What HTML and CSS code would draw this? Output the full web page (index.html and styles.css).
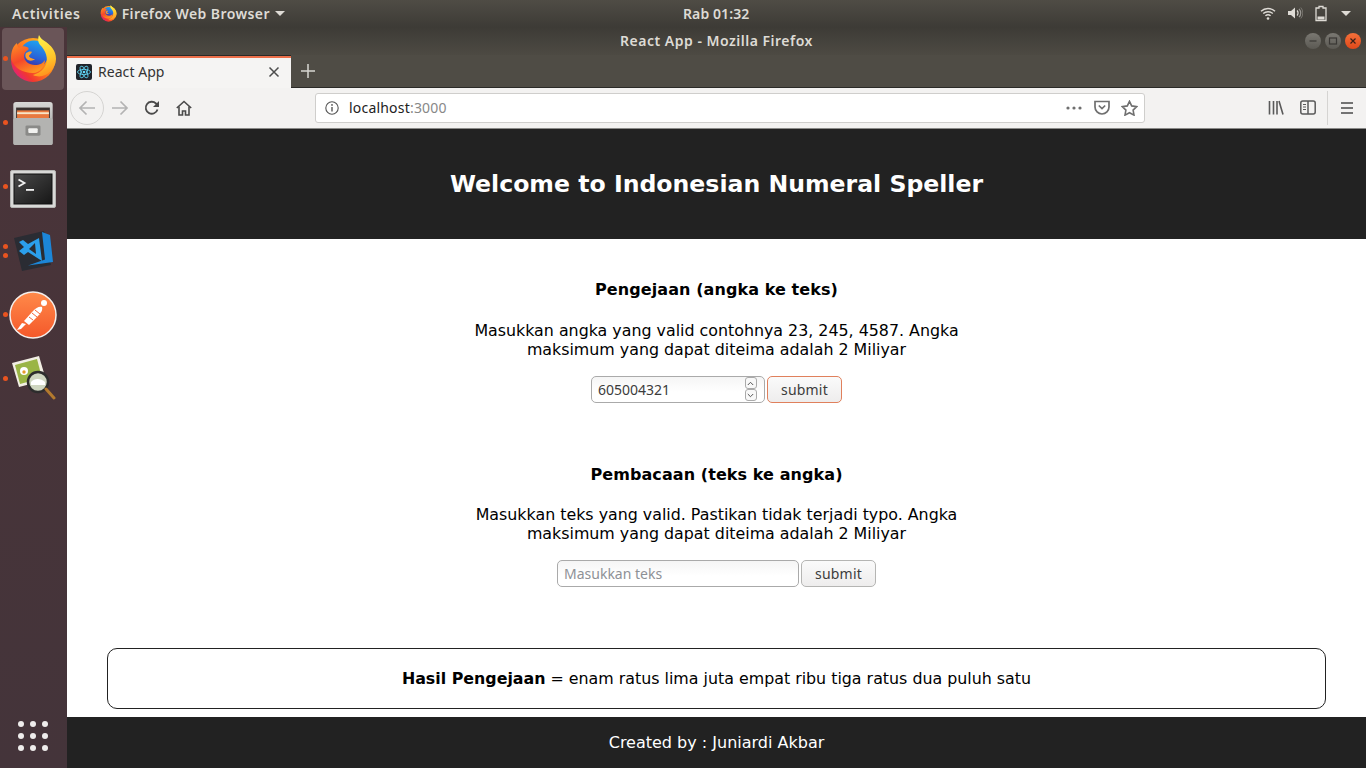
FILE: index.html
```html
<!DOCTYPE html>
<html lang="id">
<head>
<meta charset="utf-8">
<title>React App</title>
<link rel="stylesheet" href="styles.css">
</head>
<body>
<svg class="defs" width="0" height="0" aria-hidden="true">
  <defs>
    <linearGradient id="ffo" x1="0.9" y1="0.2" x2="0.15" y2="0.9"><stop offset="0" stop-color="#ffb71f"/><stop offset="0.45" stop-color="#ff7a1e"/><stop offset="0.8" stop-color="#f2382f"/><stop offset="1" stop-color="#e0207a"/></linearGradient>
    <linearGradient id="ffb" x1="0.7" y1="0" x2="0.4" y2="1"><stop offset="0" stop-color="#1fa6f0"/><stop offset="0.6" stop-color="#2a62d8"/><stop offset="1" stop-color="#40289c"/></linearGradient>
    <linearGradient id="ffy" x1="0.4" y1="0" x2="0.6" y2="1"><stop offset="0" stop-color="#fff24a"/><stop offset="0.6" stop-color="#ffc52a"/><stop offset="1" stop-color="#ff8f1e"/></linearGradient>
    <linearGradient id="ffr" x1="0.2" y1="0" x2="0.7" y2="1"><stop offset="0" stop-color="#ff8a24"/><stop offset="0.5" stop-color="#f5482a"/><stop offset="1" stop-color="#ff9a20"/></linearGradient>
    <symbol id="firefox" viewBox="0 0 48 48">
      <circle cx="24" cy="25" r="22" fill="url(#ffo)"/>
      <circle cx="25" cy="19.500" r="14" fill="url(#ffb)"/>
      <path d="M30 0C28 6 30 9 33 12C38 18 40 27 35 33C32 37 27 39 24 40C34 45 47 36 47 24C47 15 41 10 37 7C34 5 31 3 30 0z" fill="url(#ffy)"/>
      <path d="M2 24C2 16 4 11 8 8C8 11 9 12 10 13C13 11 15 11 18 12C20 13 20 14 19 15C17 16 15 18 15 21C15 26 20 30 26 30C31 30 34 28 36 25C36 31 31 38 24 38C14 38 5 33 2 24z" fill="url(#ffr)"/>
      <path d="M17 18c2-1 4-2 6-1-1 2-3 3-3 4s3 3 6 3c-2 2-5 2-7 1-3-2-3-5-2-7z" fill="#ff9d2a"/>
    </symbol>
  </defs>
</svg>

<header class="topbar">
  <div class="topbar-left">
    <span class="activities">Activities</span>
    <span class="appmenu">
      <svg class="appmenu-icon" width="17" height="17"><use href="#firefox"/></svg>
      <span>Firefox Web Browser</span>
      <i class="caret"></i>
    </span>
  </div>
  <div class="clock">Rab 01:32</div>
  <div class="tray">
    <svg width="16" height="16" viewBox="0 0 16 16" fill="none" stroke="#dedbd5" stroke-width="1.4"><path d="M1 6.3a10 10 0 0 1 14 0"/><path d="M3.2 8.6a7 7 0 0 1 9.600 0"/><path d="M5.400 10.800a4 4 0 0 1 5.200 0"/><circle cx="8" cy="13.500" r="1.300" fill="#dedbd5" stroke="none"/></svg>
    <svg width="16" height="16" viewBox="0 0 16 16" fill="none"><path d="M1 6h3l4-3.500v11L4 10H1z" fill="#dedbd5"/><path d="M10 5.500a3.500 3.500 0 0 1 0 5" stroke="#dedbd5" stroke-width="1.200"/><path d="M12 3.800a6 6 0 0 1 0 8.400" stroke="#9c9a94" stroke-width="1.200"/><path d="M13.800 2.500a8.500 8.500 0 0 1 0 11" stroke="#77756f" stroke-width="1"/></svg>
    <svg width="14" height="17" viewBox="0 0 14 17" fill="none"><path d="M5 1.500h4v1.500h3v12.500H2V3h3z" stroke="#dedbd5" stroke-width="1.300"/><rect x="3.500" y="11.500" width="7" height="3" fill="#dedbd5"/></svg>
    <i class="caret tray-caret"></i>
  </div>
</header>

<div class="desktop">
  <nav class="dock">
    <div class="dock-item is-active"><i class="dot"></i>
      <svg width="48" height="48"><use href="#firefox"/></svg>
    </div>
    <div class="dock-item"><i class="dot"></i>
      <svg width="42" height="45" viewBox="0 0 44 48">
        <defs><linearGradient id="cab" x1="0" y1="0" x2="0" y2="1"><stop offset="0" stop-color="#d8d8d6"/><stop offset="1" stop-color="#8e8e8c"/></linearGradient></defs>
        <rect x="1" y="1" width="42" height="46" rx="3" fill="url(#cab)"/>
        <rect x="4" y="7" width="36" height="12" fill="#3a3230"/>
        <rect x="5" y="10" width="34" height="9" fill="#e8793f"/>
        <rect x="5" y="12" width="34" height="2" fill="#f7e6c8"/>
        <rect x="1" y="18" width="42" height="29" rx="2" fill="#b3b3b1"/>
        <rect x="14" y="26" width="16" height="11" rx="1.500" fill="#8a8a88"/>
        <rect x="17" y="29" width="10" height="5" rx="1" fill="#f1f1ef"/>
      </svg>
    </div>
    <div class="dock-item dock-terminal"><i class="dot"></i>
      <svg width="46" height="38" viewBox="0 0 46 38">
        <defs><linearGradient id="term" x1="0" y1="0" x2="1" y2="1"><stop offset="0" stop-color="#4a4a4a"/><stop offset="1" stop-color="#161616"/></linearGradient></defs>
        <rect x="0.500" y="0.500" width="45" height="37" rx="1.500" fill="#d9d9d7" stroke="#b5b5b3"/>
        <rect x="4" y="4" width="38" height="30" fill="url(#term)" stroke="#111"/>
        <path d="M8.500 9.500l6 3.500-6 3.500" fill="none" stroke="#f2f2f2" stroke-width="1.800"/>
        <rect x="16" y="19" width="8" height="1.800" fill="#f2f2f2"/>
      </svg>
    </div>
    <div class="dock-item"><i class="dot"></i><i class="dot dot-second"></i>
      <svg width="44" height="44" viewBox="0 0 44 44">
        <path d="M3 9l30-7 7 34-29 6z" fill="#2a2c33"/>
        <path d="M31 3l8 3 3 27-25 3.500 17-6z" fill="#1c86d8"/>
        <path d="M28 9l3 23-14-9-4 3-5-4 5-4-5-5 4-2 5 4z" fill="#2b9fec"/>
        <path d="M24 14l1 11-7-5z" fill="#2a2c33"/>
      </svg>
    </div>
    <div class="dock-item"><i class="dot"></i>
      <svg width="48" height="48" viewBox="0 0 48 48">
        <defs><linearGradient id="pm" x1="0.500" y1="0" x2="0.500" y2="1"><stop offset="0" stop-color="#ff8a4a"/><stop offset="1" stop-color="#f4582a"/></linearGradient></defs>
        <circle cx="24" cy="24" r="23" fill="url(#pm)" stroke="#f4efec" stroke-width="1.500"/>
        <circle cx="35" cy="12" r="3" fill="#fff"/>
        <path d="M33 16c1 3-1 6-5 10l-8 8-5-4 9-10c3-3 6-5 9-4z" fill="#fff"/>
        <path d="M17 33l-5 5-4 1 5-7z" fill="#fff"/>
        <path d="M26 19l5 4M23 22l5 4M20 26l4 3" stroke="#f4663a" stroke-width="1"/>
      </svg>
    </div>
    <div class="dock-item"><i class="dot"></i>
      <svg width="46" height="48" viewBox="0 0 46 48">
        <path d="M2 8l27-7 7 24-27 7z" fill="#f2efe4"/>
        <path d="M5 10l22-6 5 19-22 6z" fill="#9ab545"/>
        <circle cx="14" cy="16" r="4" fill="#fff"/><circle cx="14" cy="17" r="1.700" fill="#e89a2a"/>
        <circle cx="28" cy="27" r="10" fill="#cfd6c0" stroke="#2d2d2d" stroke-width="2.500"/>
        <path d="M21 27c3-4 10-4 14 0v3H21z" fill="#fff"/>
        <path d="M36 34l8 9" stroke="#b37a2e" stroke-width="3" stroke-linecap="round"/>
      </svg>
    </div>
    <div class="dock-apps">
      <i></i><i></i><i></i><i></i><i></i><i></i><i></i><i></i><i></i>
    </div>
  </nav>

  <div class="window">
    <div class="titlebar">
      <span class="title">React App - Mozilla Firefox</span>
      <div class="winbtns">
        <span class="winbtn"><svg width="10" height="10" viewBox="0 0 10 10"><path d="M1.500 5h7" stroke="#3a3835" stroke-width="1.200"/></svg></span>
        <span class="winbtn"><svg width="10" height="10" viewBox="0 0 10 10"><rect x="1.500" y="2" width="7" height="6" fill="none" stroke="#3a3835" stroke-width="1.200"/></svg></span>
        <span class="winbtn winbtn-close"><svg width="10" height="10" viewBox="0 0 10 10"><path d="M2.500 2.500l5 5M7.500 2.500l-5 5" stroke="#3a2018" stroke-width="1.200"/></svg></span>
      </div>
    </div>

    <div class="tabstrip">
      <div class="tab">
        <svg class="favicon" width="16" height="16" viewBox="0 0 16 16"><rect width="16" height="16" rx="2" fill="#20232a"/><g fill="none" stroke="#61dafb" stroke-width="0.800"><ellipse cx="8" cy="8" rx="6.500" ry="2.600"/><ellipse cx="8" cy="8" rx="6.500" ry="2.600" transform="rotate(60 8 8)"/><ellipse cx="8" cy="8" rx="6.500" ry="2.600" transform="rotate(120 8 8)"/></g><circle cx="8" cy="8" r="1.300" fill="#61dafb"/></svg>
        <span class="tab-title">React App</span>
        <svg class="tab-close" width="12" height="12" viewBox="0 0 12 12"><path d="M1.500 1.500l9 9M10.500 1.500l-9 9" stroke="#4d4d4d" stroke-width="1.500"/></svg>
      </div>
      <svg class="newtab" width="14" height="14" viewBox="0 0 14 14"><path d="M7 0v14M0 7h14" stroke="#d8d6d1" stroke-width="1.500"/></svg>
    </div>

    <div class="navbar">
      <span class="backbtn"><svg width="18" height="16" viewBox="0 0 18 16" fill="none" stroke="#b3b3b3" stroke-width="1.700"><path d="M17 8H2M8.500 1.500L2 8l6.500 6.500"/></svg></span>
      <svg class="fwd" width="18" height="16" viewBox="0 0 18 16" fill="none" stroke="#b3b3b3" stroke-width="1.700"><path d="M1 8h15M9.500 1.500L16 8l-6.500 6.500"/></svg>
      <svg class="reload" width="16" height="16" viewBox="0 0 16 16" fill="none" stroke="#4a4a4a" stroke-width="1.800"><path d="M13.500 9.500A6 6 0 1 1 12 3.500L14.500 6"/><path d="M15 1v6H9" fill="#4a4a4a" stroke="none"/></svg>
      <svg class="home" width="16" height="16" viewBox="0 0 16 16" fill="none" stroke="#4a4a4a" stroke-width="1.600"><path d="M0.800 8L8 1.500 15.200 8"/><path d="M3 6.500V15h3.500v-4h3v4H13V6.500"/></svg>
      <div class="urlbar">
        <svg class="info" width="14" height="14" viewBox="0 0 14 14" fill="none" stroke="#555"><circle cx="7" cy="7" r="6.200" stroke-width="1.100"/><path d="M7 6v4.500" stroke-width="1.400"/><circle cx="7" cy="3.900" r="0.900" fill="#555" stroke="none"/></svg>
        <span class="url">localhost<span class="url-port">:3000</span></span>
        <svg class="more" width="16" height="4" viewBox="0 0 16 4" fill="#6f6f6f"><circle cx="2" cy="2" r="1.600"/><circle cx="8" cy="2" r="1.600"/><circle cx="14" cy="2" r="1.600"/></svg>
        <svg class="pocket" width="16" height="15" viewBox="0 0 16 15" fill="none" stroke="#6f6f6f" stroke-width="1.700"><path d="M1 1.500h14v5.500a7 7 0 0 1-14 0z"/><path d="M4.800 5.500L8 8.500l3.200-3"/></svg>
        <svg class="star" width="17" height="16" viewBox="0 0 17 16" fill="none" stroke="#6f6f6f" stroke-width="1.600"><path d="M8.500 1.300l2.200 4.600 5 .7-3.600 3.500.9 5-4.500-2.400L4 15.100l.9-5L1.300 6.600l5-.7z"/></svg>
      </div>
      <div class="nav-right">
        <svg class="library" width="16" height="15" viewBox="0 0 16 15" fill="none" stroke="#5a5a5a" stroke-width="1.600"><path d="M1.500 1v13.500M5.500 1v13.500M9 1v13.500M11 1l4 13.500"/></svg>
        <svg width="16" height="15" viewBox="0 0 16 15" fill="none" stroke="#5a5a5a" stroke-width="1.500"><rect x="0.800" y="1" width="14.400" height="13" rx="2"/><path d="M8 1v13" /><path d="M3 4.500h3M3 7h3M3 9.500h3" stroke-width="1"/></svg>
        <i class="nav-sep"></i>
        <svg width="14" height="12" viewBox="0 0 14 12" fill="none" stroke="#4a4a4a" stroke-width="1.700"><path d="M1 1h12M1 6h12M1 11h12"/></svg>
      </div>
    </div>

    <div class="page">
      <header class="hero"><h1>Welcome to Indonesian Numeral Speller</h1></header>
      <main class="content">
        <section class="speller">
          <h2>Pengejaan (angka ke teks)</h2>
          <p>Masukkan angka yang valid contohnya 23, 245, 4587. Angka<br>maksimum yang dapat diteima adalah 2 Miliyar</p>
          <form class="field">
            <span class="number-wrap">
              <input class="input input-number" type="text" value="605004321">
              <span class="spin">
                <span class="spin-btn"><svg width="7" height="5" viewBox="0 0 7 5"><path d="M0.800 4L3.500 1.300 6.200 4" fill="none" stroke="#555"/></svg></span>
                <span class="spin-btn"><svg width="7" height="5" viewBox="0 0 7 5"><path d="M0.800 1L3.500 3.700 6.200 1" fill="none" stroke="#555"/></svg></span>
              </span>
            </span>
            <button class="btn btn-focus" type="button">submit</button>
          </form>
        </section>
        <section class="speller speller-second">
          <h2>Pembacaan (teks ke angka)</h2>
          <p>Masukkan teks yang valid. Pastikan tidak terjadi typo. Angka<br>maksimum yang dapat diteima adalah 2 Miliyar</p>
          <form class="field">
            <input class="input input-text" type="text" placeholder="Masukkan teks">
            <button class="btn" type="button">submit</button>
          </form>
        </section>
        <div class="result"><span><strong>Hasil Pengejaan</strong> = enam ratus lima juta empat ribu tiga ratus dua puluh satu</span></div>
      </main>
      <footer class="footer">Created by : Juniardi Akbar</footer>
    </div>
  </div>
</div>
</body>
</html>
```

FILE: styles.css
```css
* { box-sizing: border-box; }
html, body { margin: 0; height: 100%; overflow: hidden; }
body {
  width: 1366px;
  height: 768px;
  display: flex;
  flex-direction: column;
  font-family: "DejaVu Sans", sans-serif;
  background: #fff;
}
.defs { display: block; height: 0; }
svg { display: block; flex: none; }

/* GNOME top bar */
.topbar {
  height: 27px;
  flex: none;
  display: grid;
  grid-template-columns: 671px auto 1fr;
  align-items: center;
  padding: 0 0 1px 12px;
  background: linear-gradient(#4f4c45, #3d3b36);
  color: #dedbd5;
  font-family: "Noto Sans", sans-serif;
  font-size: 14px;
  font-weight: 600;
}
.topbar-left { display: flex; align-items: center; gap: 19px; }
.activities { letter-spacing: 0.62px; }
.appmenu { display: flex; align-items: center; gap: 5px; letter-spacing: 0.42px; }
.caret {
  display: block;
  width: 0;
  height: 0;
  border: 5px solid transparent;
  border-top: 5px solid #dedbd5;
  border-bottom: 0;
}
.clock { font-size: 14px; letter-spacing: 0.1px; }
.tray { display: flex; align-items: center; justify-content: flex-end; gap: 11px; padding-right: 15px; }
.tray-caret { margin-left: 2px; }

.desktop { flex: 1; display: flex; min-height: 0; }

/* Dock */
.dock {
  width: 67px;
  flex: none;
  display: flex;
  flex-direction: column;
  background: linear-gradient(#4a3439, #44343a);
}
.dock-item {
  position: relative;
  height: 64px;
  flex: none;
  display: flex;
  align-items: center;
  justify-content: center;
  padding-right: 1px;
}
.dock-terminal { padding-top: 4px; }
.dock-item.is-active::before {
  content: "";
  position: absolute;
  inset: 1px 3px 1px 2px;
  background: #6a5558;
  border-radius: 4px;
}
.dock-item svg { position: relative; }
.dot {
  position: absolute;
  left: 3px;
  top: 50%;
  width: 5px;
  height: 5px;
  margin-top: -3px;
  border-radius: 50%;
  background: #e95420;
}
.dot-second { margin-top: 2px; }
.dock-item:nth-child(4) .dot:first-child { margin-top: -7px; }
.dock-apps {
  margin-top: auto;
  margin-bottom: 17px;
  margin-left: 18px;
  display: grid;
  grid-template-columns: repeat(3, 6px);
  gap: 6px;
}
.dock-apps i { width: 6px; height: 6px; border-radius: 50%; background: #efedec; }

/* Firefox window */
.window { flex: 1; min-width: 0; display: flex; flex-direction: column; }
.titlebar {
  height: 28px;
  flex: none;
  position: relative;
  display: flex;
  align-items: center;
  justify-content: center;
  padding-bottom: 2px;
  background: linear-gradient(#3d3b36, #4d4a43);
  color: #dedbd5;
  font-family: "Noto Sans", sans-serif;
  font-size: 14px;
  font-weight: 600;
}
.title { letter-spacing: 0.5px; }
.winbtns { position: absolute; right: 5px; top: 6px; display: flex; gap: 4px; }
.winbtn {
  width: 16px;
  height: 16px;
  border-radius: 50%;
  background: linear-gradient(#7a7872, #5b5953);
  display: flex;
  align-items: center;
  justify-content: center;
}
.winbtn-close { background: linear-gradient(#f4703a, #e0481a); }

.tabstrip {
  height: 33px;
  flex: none;
  display: flex;
  align-items: center;
  background: #4f4c45;
  border-bottom: 1px solid #2b2a27;
}
.tab {
  width: 224px;
  height: 32px;
  margin-top: 1px;
  flex: none;
  display: flex;
  align-items: center;
  padding: 0 11px 2px 9px;
  background: #f5f4f3;
  border-top: 2px solid #ec6f4a;
  box-shadow: 0 -1px 0 #2b2a27;
}
.tab-title {
  margin-left: 6px;
  flex: 1;
  font-family: "Noto Sans", sans-serif;
  font-size: 14px;
  letter-spacing: 0.05px;
  color: #333;
}
.newtab { margin-left: 10px; }

.navbar {
  height: 41px;
  flex: none;
  display: flex;
  align-items: center;
  padding: 0 12px 1px 3px;
  background: #f3f2f1;
  border-bottom: 1px solid #8a8a88;
}
.backbtn {
  width: 34px;
  height: 34px;
  flex: none;
  border-radius: 50%;
  border: 1px solid #d5d4d2;
  display: flex;
  align-items: center;
  justify-content: center;
}
.fwd { margin-left: 7px; }
.reload { margin-left: 15px; }
.home { margin-left: 16px; }
.urlbar {
  width: 830px;
  height: 30px;
  margin-left: 123px;
  flex: none;
  display: flex;
  align-items: center;
  padding: 0 6px 0 9px;
  background: #fff;
  border: 1px solid #cfcecc;
  border-radius: 3px;
}
.url {
  flex: 1;
  margin-left: 10px;
  font-family: "Noto Sans", sans-serif;
  font-size: 14px;
  letter-spacing: 0.2px;
  color: #222;
}
.url-port { color: #888; }
.pocket { margin-left: 12px; }
.star { margin-left: 11px; }
.nav-right { margin-left: auto; display: flex; align-items: center; gap: 15px; }
.library { margin-right: 1px; }
.nav-sep { display: block; width: 1px; height: 34px; background: #d5d4d2; margin: 0 -3px 0 -4px; }

/* React page */
.page { flex: 1; min-height: 0; display: flex; flex-direction: column; background: #fff; color: #000; }
.hero {
  height: 110px;
  flex: none;
  display: flex;
  align-items: center;
  justify-content: center;
  background: #222;
}
.hero h1 { margin: 0; font-size: 23.6px; font-weight: 700; color: #fff; }
.content { flex: 1; min-height: 0; display: flex; flex-direction: column; align-items: center; padding-top: 41px; }
.speller { text-align: center; font-size: 15.85px; line-height: 19px; }
.speller-second { margin-top: 62px; }
.speller h2 { margin: 0; font-size: 16px; line-height: 19px; font-weight: 700; letter-spacing: 0.08px; }
.speller p { margin: 22px 0 0; }
.speller-second p { margin-top: 21px; }
.field { margin-top: 17px; display: flex; justify-content: center; gap: 2px; }
.input {
  height: 27px;
  border: 1px solid #aaa;
  border-radius: 5px;
  padding: 0 6px;
  background: linear-gradient(#f5f5f5, #fff 60%);
  font-family: "Noto Sans", sans-serif;
  font-size: 14px;
  color: #3c3c3c;
  outline: none;
}
.input::placeholder { color: #8e9196; opacity: 1; }
.number-wrap { position: relative; display: block; }
.input-number { width: 174px; display: block; }
.input-text { width: 242px; }
.spin { position: absolute; right: 8px; top: 1px; display: flex; flex-direction: column; gap: 0; }
.spin-btn {
  width: 12px;
  height: 12px;
  border: 1px solid #aaa;
  border-radius: 3px;
  background: #f8f8f8;
  display: flex;
  align-items: center;
  justify-content: center;
}
.btn {
  height: 27px;
  width: 75px;
  padding: 0;
  border: 1px solid #b5b5b3;
  border-radius: 5px;
  background: linear-gradient(#fafafa, #eeeded);
  font-family: "Noto Sans", sans-serif;
  font-size: 14px;
  letter-spacing: 0.2px;
  color: #3c3c3c;
}
.btn-focus { border-color: #e0805c; }
.result {
  margin-top: 61px;
  width: 1219px;
  height: 61px;
  display: flex;
  align-items: center;
  justify-content: center;
  border: 1px solid #222;
  border-radius: 10px;
  font-size: 15.85px;
}
.footer {
  height: 51px;
  flex: none;
  display: flex;
  align-items: center;
  justify-content: center;
  background: #222;
  color: #fff;
  font-size: 16px;
}
```
